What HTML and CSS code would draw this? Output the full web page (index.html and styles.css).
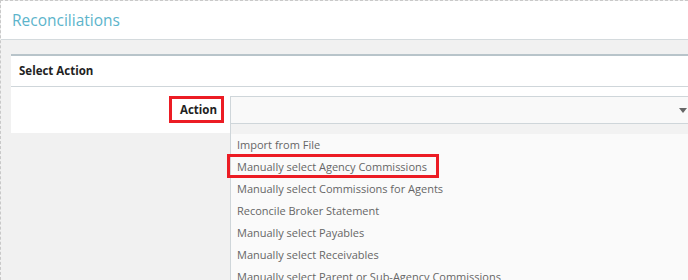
FILE: index.html
```html
<!DOCTYPE html>
<html>
<head>
  <title>Reconciliations</title>
  <link rel="stylesheet" href="styles.css">
</head>
<body>
  <div class="page">
    <div class="page-header">
      <div class="page-title">Reconciliations</div>
    </div>

    <div class="page-content">
      <div class="panel">
        <div class="panel-title">Select Action</div>
        <div class="panel-body">
          <div class="field-label">
            <span class="label-box">Action</span>
          </div>
          <div class="field-input">
            <div class="select-box">
              <span class="caret"></span>
            </div>
            <!-- open dropdown list -->
            <ul class="dropdown">
              <li>Import from File</li>
              <li><span class="marked">Manually select Agency Commissions</span></li>
              <li>Manually select Commissions for Agents</li>
              <li>Reconcile Broker Statement</li>
              <li>Manually select Payables</li>
              <li>Manually select Receivables</li>
              <li>Manually select Parent or Sub-Agency Commissions</li>
            </ul>
          </div>
        </div>
      </div>
    </div>
  </div>
</body>
</html>
```

FILE: styles.css
```css
/* General Styles */
body {
  font-family: "Open Sans", Arial, sans-serif;
  margin: 0;
  padding: 0;
  background-color: #f1f1f1;
  overflow: hidden;
}

.page {
  height: 280px;
  border-left: 1px dashed #c9c9c9;
  border-top: 1px dashed #c9c9c9;
  box-sizing: border-box;
}

/* Header */
.page-header {
  height: 38px;
  background-color: #ffffff;
  border-bottom: 1px solid #d4dadd;
  display: flex;
  align-items: center;
  padding-left: 11px;
}

.page-title {
  font-size: 15.5px;
  color: #5cb4cb;
}

.page-content {
  padding: 14px 0 0 10px;
}

/* Panel */
.panel {
  background-color: #ffffff;
  border-top: 2px solid #b8c4ca;
}

.panel-title {
  height: 30px;
  line-height: 29px;
  padding-left: 8px;
  font-size: 11.5px;
  font-weight: bold;
  color: #222222;
  border-bottom: 1px solid #cfd6da;
}

.panel-body {
  display: flex;
  height: 46px;
  padding-top: 9px;
  box-sizing: border-box;
}

.field-label {
  width: 213px;
  display: flex;
  justify-content: flex-end;
  align-items: flex-start;
}

.label-box {
  display: block;
  border: 3px solid #ec1c24;
  height: 21px;
  line-height: 21px;
  padding: 0 4px 0 8px;
  font-size: 11.5px;
  font-weight: bold;
  color: #222222;
}

.field-input {
  flex: 1;
  margin-left: 6px;
  position: relative;
}

.select-box {
  height: 26px;
  border: 1px solid #cfd6da;
  border-right: none;
  background-color: #f9f9f9;
  position: relative;
}

.caret {
  position: absolute;
  right: 1px;
  top: 11px;
  border-left: 4px solid transparent;
  border-right: 4px solid transparent;
  border-top: 5px solid #666666;
}

/* Dropdown list */
.dropdown {
  position: absolute;
  top: 28px;
  left: 0;
  right: 0;
  height: 200px;
  margin: 0;
  padding: 10px 0 0 0;
  list-style: none;
  background: linear-gradient(#f2f2f2 0, #f2f2f2 10px, #fafafa 10px);
  border-left: 1px solid #cfd6da;
  font-size: 11px;
  color: #666666;
}

.dropdown li {
  height: 22px;
  line-height: 22px;
  padding-left: 6px;
}

.dropdown .marked {
  display: inline-block;
  vertical-align: top;
  margin-left: -10px;
  margin-top: -2px;
  padding: 0 9px 0 7px;
  border: 3px solid #ec1c24;
  height: 18px;
  line-height: 19px;
}
```
